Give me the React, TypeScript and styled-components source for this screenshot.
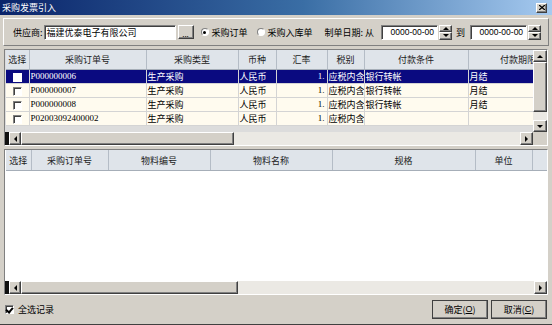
import React from 'react';
import styled, { createGlobalStyle, css } from 'styled-components';

const GlobalStyle = createGlobalStyle`
  html, body {
    margin: 0;
    padding: 0;
    background: #d4d0c8;
  }
  body {
    font-family: "Noto Sans CJK SC", "Liberation Sans", sans-serif;
    font-size: 9px;
    line-height: 1;
    color: #000;
  }
`;

const raised = css`
  border: 1px solid;
  border-color: #fff #404040 #404040 #fff;
  box-shadow: inset -1px -1px 0 #808080;
`;

const sunken = css`
  border: 1px solid;
  border-color: #808080 #fff #fff #808080;
  box-shadow: inset 1px 1px 0 #404040;
`;

const Window = styled.div`
  width: 552px;
  height: 325px;
  box-sizing: border-box;
  background: #d4d0c8;
  display: flex;
  flex-direction: column;
  border-bottom: 1px solid #404040;
`;

const TitleBar = styled.div`
  height: 15px;
  flex: none;
  display: flex;
  align-items: center;
  justify-content: space-between;
  padding: 0 5px 0 2px;
  background: linear-gradient(90deg, #0a246a 0%, #3a6ea5 55%, #a6caf0 100%);
  color: #fff;
`;

const CloseBtn = styled.div`
  width: 11px;
  height: 10px;
  box-sizing: border-box;
  ${raised};
  background: #d4d0c8;
  display: flex;
  align-items: center;
  justify-content: center;
`;

const Toolbar = styled.div`
  flex: none;
  height: 28px;
  margin: 3px 3px 0;
  box-sizing: border-box;
  border: 1px solid;
  border-color: #fff #808080 #808080 #fff;
  display: flex;
  align-items: center;
  padding-left: 9px;
`;

const Label = styled.span<{ $ml?: number }>`
  margin-left: ${p => p.$ml ?? 0}px;
  white-space: nowrap;
`;

const TextInput = styled.div<{ $w: number; $ml: number }>`
  width: ${p => p.$w}px;
  height: 15px;
  margin-left: ${p => p.$ml}px;
  box-sizing: border-box;
  ${sunken};
  background: #fff;
  display: flex;
  align-items: center;
  padding-left: 2px;
  white-space: nowrap;
`;

const DateText = styled.span`
  font-family: "Liberation Sans", sans-serif;
  font-size: 8.5px;
  margin-left: auto;
  margin-right: 3px;
`;

const SmallButton = styled.div`
  width: 16px;
  height: 14px;
  margin-left: 2px;
  box-sizing: border-box;
  ${raised};
  background: #d4d0c8;
  display: flex;
  align-items: flex-end;
  justify-content: center;
  font-size: 8px;
  line-height: 9px;
`;

const Radio = styled.span<{ $on?: boolean }>`
  width: 8px;
  height: 8px;
  border-radius: 50%;
  box-sizing: border-box;
  border: 1px solid #808080;
  border-right-color: #fff;
  border-bottom-color: #fff;
  background: #fff;
  display: inline-flex;
  align-items: center;
  justify-content: center;
  margin-right: 3px;
  &::after {
    content: '';
    width: 3px;
    height: 3px;
    border-radius: 50%;
    background: ${p => (p.$on ? '#000' : 'transparent')};
  }
`;

const RadioItem = styled.label<{ $ml: number }>`
  display: flex;
  align-items: center;
  margin-left: ${p => p.$ml}px;
`;

const Spinner = styled.div`
  width: 13px;
  height: 15px;
  display: flex;
  flex-direction: column;
  margin-left: 1px;
`;

const SpinBtn = styled.div`
  flex: 1;
  box-sizing: border-box;
  ${raised};
  background: #d4d0c8;
  display: flex;
  align-items: center;
  justify-content: center;
`;

const Arrow = styled.span<{ $dir: 'up' | 'down' | 'left' | 'right' }>`
  width: 0;
  height: 0;
  border: 3px solid transparent;
  ${p =>
    p.$dir === 'up'
      ? 'border-bottom-color:#000;border-top-width:0;'
      : p.$dir === 'down'
      ? 'border-top-color:#000;border-bottom-width:0;'
      : p.$dir === 'left'
      ? 'border-right-color:#000;border-left-width:0;'
      : 'border-left-color:#000;border-right-width:0;'}
`;

const GridBox = styled.div<{ $h: number }>`
  flex: none;
  height: ${p => p.$h}px;
  margin: 3px 4px 0 4px;
  box-sizing: border-box;
  ${sunken};
  display: flex;
  flex-direction: column;
  background: #dcdcdc;
`;

const GridMain = styled.div`
  flex: 1;
  display: flex;
  min-height: 0;
`;

const GridView = styled.div<{ $bg: string }>`
  flex: 1;
  overflow: hidden;
  background: ${p => p.$bg};
  padding-left: 1px;
`;

const Table = styled.table`
  border-collapse: collapse;
  table-layout: fixed;
  white-space: nowrap;
`;

const Th = styled.th<{ $h: number }>`
  height: ${p => p.$h}px;
  padding: 0;
  font-weight: normal;
  color: #222;
  background: #dfe4ea;
  border-right: 1px solid #b4bcc6;
  border-bottom: 1px solid #a6aeb8;
  text-align: center;
  overflow: hidden;
`;

const Td = styled.td<{ $sel?: boolean; $align?: string; $latin?: boolean }>`
  height: 13px;
  padding: 0 0 0 1px;
  background: ${p => (p.$sel ? '#0a0a80' : '#fffbef')};
  color: ${p => (p.$sel ? '#fff' : '#000')};
  border-right: 1px solid #d4d4d4;
  border-bottom: 1px solid #d4d4d4;
  text-align: ${p => p.$align ?? 'left'};
  font-family: ${p =>
    p.$latin ? '"Liberation Serif", serif' : '"Noto Sans CJK SC", sans-serif'};
  overflow: hidden;
`;

const Check = styled.span<{ $on?: boolean; $flat?: boolean }>`
  display: inline-block;
  width: 9px;
  height: 9px;
  box-sizing: border-box;
  background: #fff;
  vertical-align: middle;
  position: relative;
  ${p => (p.$flat ? 'border: 1px solid #fff;' : sunken)};
  ${p =>
    p.$on &&
    `&::after{content:'';position:absolute;left:1px;top:0px;width:3px;height:5px;border:solid #000;border-width:0 2px 2px 0;transform:rotate(40deg);}`}
`;

const VScroll = styled.div`
  width: 14px;
  flex: none;
  display: flex;
  flex-direction: column;
  background: #ebe9e4;
`;

const ScrollBtn = styled.div<{ $w?: number; $h?: number }>`
  width: ${p => p.$w ?? 14}px;
  height: ${p => p.$h ?? 13}px;
  flex: none;
  box-sizing: border-box;
  ${raised};
  background: #d4d0c8;
  display: flex;
  align-items: center;
  justify-content: center;
`;

const Thumb = styled.div<{ $size: number; $vertical?: boolean }>`
  flex: none;
  ${p => (p.$vertical ? `height:${p.$size}px;` : `width:${p.$size}px;`)}
  box-sizing: border-box;
  ${raised};
  background: #d4d0c8;
`;

const Track = styled.div`
  flex: 1;
  background: #ebe9e4;
`;

const HScrollRow = styled.div`
  height: 13px;
  flex: none;
  display: flex;
  background: #ebe9e4;
`;

const Stub = styled.div`
  width: 4px;
  flex: none;
  background: #101010;
`;

const Corner = styled.div`
  width: 14px;
  flex: none;
  background: #d4d0c8;
`;

const Footer = styled.div`
  flex: 1;
  display: flex;
  align-items: center;
  justify-content: space-between;
  padding: 0 5px 0 5px;
`;

const CheckAll = styled.label`
  display: flex;
  align-items: center;
  gap: 4px;
`;

const Buttons = styled.div`
  display: flex;
  gap: 3px;
`;

const Button = styled.div`
  width: 56px;
  height: 19px;
  box-sizing: border-box;
  ${raised};
  outline: 1px solid #404040;
  outline-offset: -1px;
  background: #d4d0c8;
  display: flex;
  align-items: center;
  justify-content: center;
  u {
    font-family: "Liberation Sans", sans-serif;
  }
`;

const topCols = [23, 117, 92, 38, 51, 37, 104, 100];
const topHeads = ['选择', '采购订单号', '采购类型', '币种', '汇率', '税别', '付款条件', '付款期限'];
const rows = [
  ['P000000006', '生产采购', '人民币', '1.', '应税内含', '银行转帐', '月结'],
  ['P000000007', '生产采购', '人民币', '1.', '应税内含', '银行转帐', '月结'],
  ['P000000008', '生产采购', '人民币', '1.', '应税内含', '银行转帐', '月结'],
  ['P02003092400002', '生产采购', '人民币', '1.', '应税内含', '', ''],
];

const bottomCols = [25, 77, 102, 122, 143, 57, 30];
const bottomHeads = ['选择', '采购订单号', '物料编号', '物料名称', '规格', '单位', ''];

const HScroll = ({ thumb, corner }: { thumb: number; corner?: boolean }) => (
  <HScrollRow>
    <Stub />
    <ScrollBtn $w={12}>
      <Arrow $dir="left" />
    </ScrollBtn>
    <Thumb $size={thumb} />
    <Track />
    <ScrollBtn $w={13}>
      <Arrow $dir="right" />
    </ScrollBtn>
    {corner && <Corner />}
  </HScrollRow>
);

const DateSpin = () => (
  <Spinner>
    <SpinBtn>
      <Arrow $dir="up" />
    </SpinBtn>
    <SpinBtn>
      <Arrow $dir="down" />
    </SpinBtn>
  </Spinner>
);

const App = (): React.ReactElement => {
  return (
    <Window>
      <GlobalStyle />
      <TitleBar>
        <span>采购发票引入</span>
        <CloseBtn>
          <svg width="6" height="5" viewBox="0 0 6 5">
            <path d="M0 0L6 5M6 0L0 5" stroke="#000" strokeWidth="1.3" />
          </svg>
        </CloseBtn>
      </TitleBar>

      <Toolbar>
        <Label>供应商:</Label>
        <TextInput $w={132} $ml={1}>
          福建优泰电子有限公司
        </TextInput>
        <SmallButton>...</SmallButton>
        <RadioItem $ml={7}>
          <Radio $on />
          采购订单
        </RadioItem>
        <RadioItem $ml={9}>
          <Radio />
          采购入库单
        </RadioItem>
        <Label $ml={12}>制单日期: 从</Label>
        <TextInput $w={57} $ml={7}>
          <DateText>0000-00-00</DateText>
        </TextInput>
        <DateSpin />
        <Label $ml={4}>到</Label>
        <TextInput $w={57} $ml={5}>
          <DateText>0000-00-00</DateText>
        </TextInput>
        <DateSpin />
      </Toolbar>

      <GridBox $h={97}>
        <GridMain>
          <GridView $bg="#dcdcdc">
            <Table style={{ width: topCols.reduce((a, b) => a + b, 0) }}>
              <colgroup>
                {topCols.map((w, i) => (
                  <col key={i} style={{ width: w }} />
                ))}
              </colgroup>
              <thead>
                <tr>
                  {topHeads.map(h => (
                    <Th key={h} $h={19}>
                      {h}
                    </Th>
                  ))}
                </tr>
              </thead>
              <tbody>
                {rows.map((r, i) => {
                  const sel = i === 0;
                  return (
                    <tr key={r[0]}>
                      <Td $sel={sel} $align="center">
                        <Check $flat={sel} />
                      </Td>
                      <Td $sel={sel} $latin>
                        {r[0]}
                      </Td>
                      <Td $sel={sel}>{r[1]}</Td>
                      <Td $sel={sel}>{r[2]}</Td>
                      <Td $sel={sel} $align="right" $latin style={{ paddingRight: 2 }}>
                        {r[3]}
                      </Td>
                      <Td $sel={sel}>{r[4]}</Td>
                      <Td $sel={sel}>{r[5]}</Td>
                      <Td $sel={sel}>{r[6]}</Td>
                    </tr>
                  );
                })}
              </tbody>
            </Table>
          </GridView>
          <VScroll>
            <ScrollBtn $h={12}>
              <Arrow $dir="up" />
            </ScrollBtn>
            <Thumb $vertical $size={50} />
            <Track />
            <ScrollBtn $h={12}>
              <Arrow $dir="down" />
            </ScrollBtn>
          </VScroll>
        </GridMain>
        <HScroll thumb={213} corner />
      </GridBox>

      <GridBox $h={146}>
        <GridMain>
          <GridView $bg="#fff">
            <Table style={{ width: bottomCols.reduce((a, b) => a + b, 0) }}>
              <colgroup>
                {bottomCols.map((w, i) => (
                  <col key={i} style={{ width: w }} />
                ))}
              </colgroup>
              <thead>
                <tr>
                  {bottomHeads.map((h, i) => (
                    <Th key={i} $h={20}>
                      {h}
                    </Th>
                  ))}
                </tr>
              </thead>
            </Table>
          </GridView>
        </GridMain>
        <HScroll thumb={217} />
      </GridBox>

      <Footer>
        <CheckAll>
          <Check $on />
          全选记录
        </CheckAll>
        <Buttons>
          <Button>
            确定(<u>O</u>)
          </Button>
          <Button>
            取消(<u>C</u>)
          </Button>
        </Buttons>
      </Footer>
    </Window>
  );
};

export default App;
